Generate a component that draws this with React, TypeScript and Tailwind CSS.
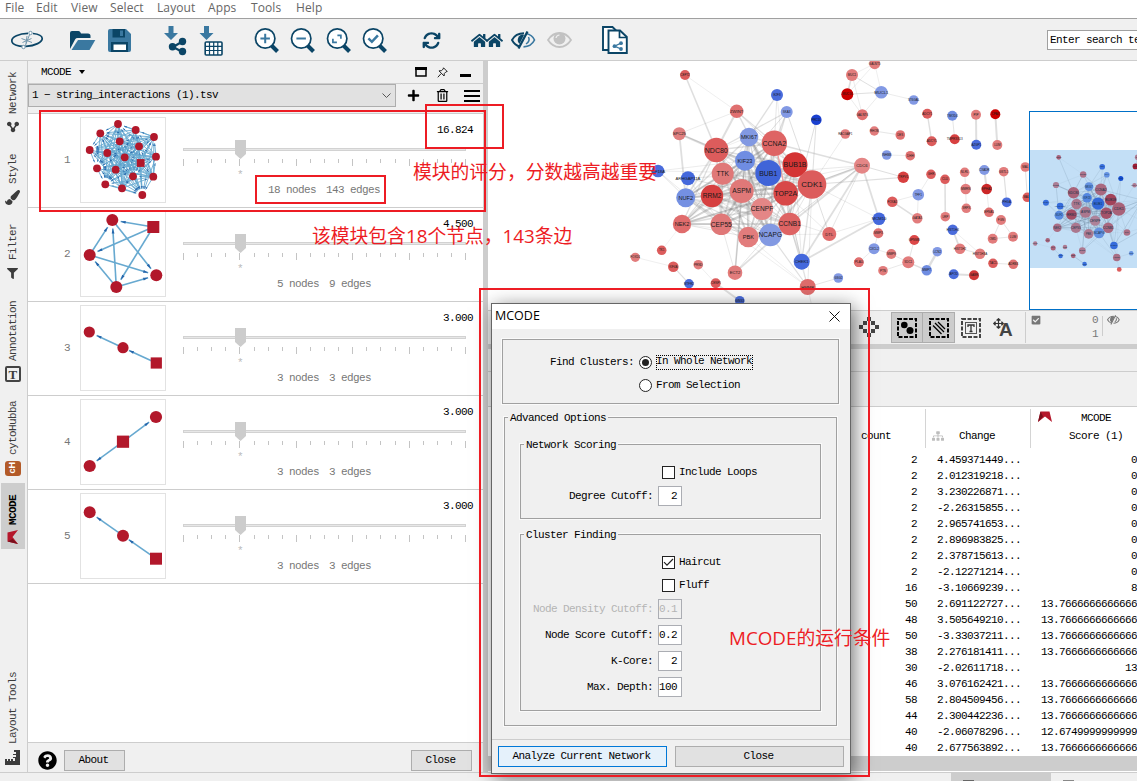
import React from "react";
import { FaShareAlt, FaFilter, FaPaintBrush, FaHome, FaEyeSlash, FaQuestionCircle, FaSitemap, FaCheckSquare, FaArrowsAlt, FaRegTrashAlt, FaPlus } from "react-icons/fa";
import { FaArrowsRotate } from "react-icons/fa6";

const DARK = "#0b4566";
const MID = "#3a78a0";

/* ---------- network data ---------- */

type N = [id: string, x: number, y: number, r: number, fill: string, label?: string];

const R = "#dc5c5c";
const L = "#e27c7c";
const B = "#4a6cdc";
const LB = "#8299e4";

const core: N[] = [
  ["MKI67", 749, 137, 9.3, "#8299e2"],
  ["NDC80", 716.3, 150, 12.2, "#dc5c5c"],
  ["CCNA2", 774.3, 143.3, 12.7, "#de6464"],
  ["KIF23", 745, 160.7, 10, "#6f8de2"],
  ["BUB1B", 795, 164.7, 12.5, "#d43434"],
  ["BUB1", 768.3, 173, 13, "#4064d8"],
  ["TTK", 722.7, 173.7, 11, "#e07878"],
  ["CDK1", 812, 184.5, 14.3, "#dc5c5c"],
  ["ASPM", 741.7, 191, 12, "#e07878"],
  ["TOP2A", 785.7, 193.3, 12.3, "#d84848"],
  ["RRM2", 712, 196, 11.2, "#d64040"],
  ["NUF2", 685.7, 197.7, 9.5, "#7490e2"],
  ["CENPF", 762, 209, 11, "#e48686"],
  ["CEP55", 721.3, 224.3, 10.8, "#e07878"],
  ["CCNB1", 789.7, 224, 11.2, "#de6464"],
  ["NCAPG", 770.3, 235, 11.3, "#8299e2"],
  ["PBK", 748.3, 237, 10.3, "#e27c7c"],
  ["NEK2", 682, 224, 9.2, "#e06c6c"],
];

const outer: N[] = [
  ["CEP72", 685, 75, 5, R], ["DNMT", 736.7, 111.3, 6.8, "#e07070", "ZWINT"],
  ["E2F8", 777, 95, 6, B], ["SKA3", 786.7, 112, 6, LB], ["PRC1L", 816.3, 119.7, 5.3, "#1a40d0"],
  ["SPC25", 679.3, 133.7, 6.5, "#e07f7f"], ["KIF18A", 658, 171, 6.3, B],
  ["ARHGAP11A", 688, 178.3, 7, "#4468dc"], ["DTL", 829.3, 234, 7, "#e06c6c"],
  ["CHEK1", 801.7, 261.7, 8, "#4468dc"], ["HMMR", 807.7, 287, 8, "#de6c6c"],
  ["ECT2", 735, 272.7, 7.3, L], ["TK1", 661.7, 250.3, 4.8, R], ["FOXD1", 635.3, 257.3, 4.6, L],
  ["KIF4A", 673.3, 266.7, 5.3, R], ["PRND", 698.3, 264.7, 4.8, L], ["MTFR2", 689, 283.7, 4.7, B],
  ["CENPI", 715.7, 283.3, 5, R], ["GINS3", 739.7, 300.7, 4.8, B], ["GSG2", 838.3, 278, 4.8, LB],
  ["PIMS", 858.7, 262.3, 4.8, R], ["LOW", 813, 312, 5, R, ""],
  ["GALNT5", 874.7, 63.7, 5.5, L], ["MUC1", 852, 75, 6, L], ["MUC16", 847.3, 94.3, 6, "#cc0000"],
  ["MUCL1", 881.3, 92.3, 6.3, LB], ["ST6GAL", 913.7, 100, 4.8, LB], ["GALNT6", 862.3, 114.7, 5.5, "#e07070"],
  ["RACGAP1", 845.3, 134, 4.8, L], ["SHH", 874.3, 131, 4.7, L, "RHOB"], ["DES", 900.3, 135, 4.8, "#e07070"],
  ["INHBB", 886.7, 155, 4.8, LB], ["DHH", 910.3, 155.7, 4.8, "#e07070"], ["CDC6", 862, 165.7, 8, "#e48686"],
  ["TRPV1", 903.3, 177.3, 5.7, "#d84040"], ["GHR", 931, 174.3, 4.8, R], ["TFF1", 918.3, 194.7, 5.8, LB],
  ["FOXA1", 892.3, 201.7, 5.3, R], ["ESR1", 917.3, 218.3, 5.2, L, "GATA3"], ["MCM10", 879, 218.7, 6.3, "#4468dc"],
  ["MMP3", 878.3, 233.3, 5, "#e07070"], ["COMP", 874, 248.7, 5.5, LB, "CXCL2"], ["MMP9", 891.3, 254, 5, L],
  ["SPP1", 859, 262.3, 4.8, "#e07070", "PLAU"], ["PTN", 883, 270.7, 4.8, L], ["SDC1", 908.3, 262.3, 6, L],
  ["WNT1", 914.3, 240, 5, "#dc4848", "GPNMB"], ["MMP7", 926.7, 270.3, 5.2, "#6f8de2"], ["SCN1", 937.3, 251.7, 4.8, LB, "LCN2"],
  ["ADCY1", 927.3, 113.7, 5, R], ["ADCY5", 931.7, 141.3, 5, R], ["THBD", 952.3, 115.7, 5, "#6f8de2", "TMOD4"],
  ["TNMD", 954.7, 139.3, 5, "#d84040", "TMPRSS13"], ["PIP", 976, 114.7, 5, L], ["AZGP1", 976.3, 144.7, 5, B],
  ["APOA", 995.3, 114.3, 5, "#cc0000", "CPA3"], ["LUM", 997.3, 145, 5, L, "LUM"], ["NLRL", 964.7, 172.3, 4.8, L],
  ["MMRN", 965.7, 189, 5.2, L], ["BMP", 966.3, 208.3, 4.8, L, "SRPX"], ["KIF", 984.3, 170, 5, LB, "CXADR"],
  ["EPHA", 986.7, 189, 5.3, "#cc2828", "EPHA2"], ["EFNA", 989, 212.3, 4.8, "#e07070", "EFNA5"], ["GSTL1", 1003.7, 171.7, 4.8, L],
  ["FAH", 1006.7, 202.3, 4.9, B, "PHGA"], ["MAL", 1025.3, 167, 4.8, L], ["MAL2", 1027.3, 197.3, 4.8, R],
  ["CLU", 945, 179.3, 4.8, R], ["LRP", 945.3, 216.7, 4.8, L], ["FGN", 1001, 220, 5, L], ["DVD", 992.7, 238.7, 5, L, "OMD"],
  ["LUH", 1013, 236.7, 5, L, "LUM"], ["UGT8", 952.7, 229.7, 5.2, B, "HIST1H4"], ["HIST", 960, 248.7, 5.3, L, "HIST1H2"],
  ["H3", 980, 253.7, 5.3, L, "HIST1H3A"], ["TAC1", 993, 263.3, 4.8, R], ["NPY", 1013.3, 264.3, 4.8, "#e07070", "ADRB3"],
  ["APOD", 953.7, 274.3, 5, B], ["GABR", 974, 275.3, 5, "#d03838"],
];

const nodes = [...core, ...outer];
const at = new Map(nodes.map((n) => [n[0], n] as const));

type E = [a: string, b: string, w: number];
const links: E[] = [
  ["CEP72", "NDC80", 1.6], ["CEP72", "DNMT", 0.5], ["DNMT", "NDC80", 2], ["DNMT", "SPC25", 0.6], ["DNMT", "BUB1", 1.4],
  ["DNMT", "CCNA2", 1.2], ["DNMT", "CDK1", 0.8], ["SPC25", "NDC80", 2.2], ["SPC25", "NUF2", 1.8], ["SPC25", "KIF23", 0.8],
  ["SPC25", "BUB1", 0.6], ["E2F8", "CCNA2", 0.8], ["E2F8", "MKI67", 1.3], ["E2F8", "CCNB1", 0.5], ["SKA3", "NDC80", 1.2], ["SKA3", "BUB1", 1.2],
  ["SKA3", "KIF23", 1], ["SKA3", "CDK1", 1], ["SKA3", "CCNA2", 1.2], ["PRC1L", "CDK1", 1], ["PRC1L", "CCNB1", 1],
  ["KIF18A", "KIF23", 0.6], ["KIF18A", "BUB1", 0.6], ["KIF18A", "CEP55", 0.6], ["KIF18A", "NUF2", 0.8],
  ["ARHGAP11A", "BUB1", 0.8], ["ARHGAP11A", "ASPM", 1], ["ARHGAP11A", "NUF2", 1], ["ARHGAP11A", "CEP55", 0.7],
  ["CDC6", "CCNA2", 1.7], ["CDC6", "CDK1", 2], ["CDC6", "CCNB1", 1.7], ["CDC6", "TOP2A", 1], ["CDC6", "BUB1", 0.7],
  ["CDC6", "RRM2", 0.6], ["CDC6", "CHEK1", 1.8], ["CDC6", "MCM10", 1.8], ["CDC6", "DTL", 0.8], ["CDC6", "TRPV1", 1],
  ["CDC6", "NCAPG", 1], ["CDK1", "TRPV1", 1.2], ["CDK1", "MCM10", 0.6], ["CHEK1", "MCM10", 1.8], ["DTL", "MCM10", 0.6],
  ["CHEK1", "CDK1", 1.4], ["CHEK1", "CCNB1", 1.6], ["CHEK1", "CCNA2", 0.9], ["CHEK1", "TOP2A", 0.7], ["CHEK1", "BUB1B", 0.7],
  ["DTL", "CDK1", 1], ["DTL", "RRM2", 0.6], ["DTL", "TOP2A", 0.6], ["DTL", "NCAPG", 0.5],
  ["HMMR", "CDK1", 0.7], ["HMMR", "CCNB1", 0.7], ["HMMR", "NCAPG", 1.2], ["HMMR", "CEP55", 0.5], ["HMMR", "PBK", 0.5],
  ["HMMR", "CHEK1", 0.7], ["HMMR", "GSG2", 0.8], ["HMMR", "LOW", 0.6], ["ECT2", "CCNB1", 1.7], ["ECT2", "ASPM", 1.7],
  ["ECT2", "CDK1", 0.8], ["ECT2", "CEP55", 0.7], ["ECT2", "KIF23", 1.1], ["TK1", "NEK2", 0.4], ["FOXD1", "KIF4A", 0.5],
  ["KIF4A", "MTFR2", 1.2], ["PRND", "CENPI", 0.5], ["CENPI", "GINS3", 2], ["RACGAP1", "CDK1", 0.6],
  ["GALNT5", "MUC1", 0.5], ["GALNT5", "MUC16", 0.5], ["GALNT5", "MUCL1", 0.5], ["MUC1", "MUC16", 1.6], ["MUC1", "MUCL1", 1],
  ["MUC16", "MUCL1", 1], ["MUC16", "GALNT6", 0.6], ["MUC1", "GALNT6", 0.6], ["MUCL1", "GALNT6", 0.6], ["MUCL1", "ST6GAL", 0.6],
  ["SHH", "DES", 0.8], ["INHBB", "DHH", 0.6], ["GHR", "TFF1", 0.6], ["TFF1", "FOXA1", 0.6], ["TFF1", "ESR1", 0.6],
  ["FOXA1", "ESR1", 1.6], ["MCM10", "MMP3", 0.5], ["MMP3", "COMP", 0.7], ["COMP", "MMP9", 0.6], ["COMP", "SPP1", 0.6],
  ["MMP9", "SDC1", 0.7], ["PTN", "SDC1", 0.7], ["WNT1", "SDC1", 0.8], ["SDC1", "MMP7", 1.4], ["MMP7", "SCN1", 2.4],
  ["ADCY1", "ADCY5", 1.4], ["THBD", "TNMD", 0.8], ["PIP", "AZGP1", 2], ["APOA", "LUM", 2], ["NLRL", "MMRN", 0.7],
  ["MMRN", "BMP", 0.7], ["KIF", "EPHA", 2], ["EPHA", "EFNA", 0.6], ["GSTL1", "FAH", 1.2], ["MAL", "MAL2", 1], ["CLU", "LRP", 1.6],
  ["FGN", "DVD", 0.8], ["FGN", "LUH", 0.8], ["DVD", "LUH", 0.8], ["UGT8", "HIST", 1.8], ["UGT8", "H3", 0.5], ["HIST", "H3", 0.8],
  ["TAC1", "NPY", 0.8], ["APOD", "GABR", 2],
];

core.forEach((a, i) =>
  core.slice(i + 1).forEach((b, j) => {
    const h = (i * 7 + j * 5) % 11;
    if (h !== 3) links.push([a[0], b[0], 0.5 + h * 0.16]);
  }),
);

function Graph({ maxX = 2000 }: { maxX?: number }) {
  return (
    <>
      <g stroke="#808080" strokeOpacity="0.25">
        {links.map(([a, b, w], i) => {
          const p = at.get(a)!;
          const q = at.get(b)!;
          return <line key={i} x1={p[1]} y1={p[2]} x2={q[1]} y2={q[2]} strokeWidth={w} />;
        })}
      </g>
      <line x1="777" y1="150" x2="784" y2="185" stroke="#f0a0a0" strokeWidth="1.2" />
      <g fontFamily="Liberation Sans, sans-serif" textAnchor="middle" fill="#1a1a1a">
        {nodes.filter((n) => n[1] < maxX).map(([id, x, y, r, fill, label]) => {
          const size = r > 12 ? 7 : r > 10.5 ? 6.6 : r > 9 ? 5.6 : r > 6.2 ? 4.2 : 3;
          return (
            <g key={id}>
              <circle cx={x} cy={y} r={r} fill={fill} />
              {label !== "" && <text x={x} y={y + size * 0.36} fontSize={id === "CDK1" ? 8 : size}>{label ?? id}</text>}
            </g>
          );
        })}
      </g>
    </>
  );
}

/* ---------- toolbar icons ---------- */

function Svg({ x, y = 24, w, h = 32, className = "", children }: { x: number; y?: number; w: number; h?: number; className?: string; children: React.ReactNode }) {
  return (
    <svg viewBox={`${x} ${y} ${w} ${h}`} width={w} height={h} className={`block shrink-0 ${className}`} fill="none">
      {children}
    </svg>
  );
}

function Magnifier({ x, className, children }: { x: number; className: string; children: React.ReactNode }) {
  return (
    <Svg x={x} w={26} className={className}>
      <g transform={`translate(${x} 0)`}>
        <path d="M17.500 45.500l6 6" stroke={DARK} strokeWidth="4" />
        <circle cx="11.200" cy="38.500" r="9.700" fill="#fff" stroke={DARK} strokeWidth="1.700" />
        <g stroke={MID} strokeWidth="2" transform="translate(-0.100 -0.200)">{children}</g>
      </g>
    </Svg>
  );
}

function Toolbar() {
  return (
    <div className="flex h-[42px] shrink-0 items-start border-b border-[#cdcdcd] bg-[#f0f0f0] pt-[5px]">
      <Svg x={10} w={34} className="ml-[10px]">
        <path d="M28 33.400C19 33.500 11.500 37 11.800 41c.3 3.800 7 5.800 14 5.300" stroke={DARK} strokeWidth="1.700" />
        <path d="M26 46.300c9-.5 16.500-4 16.200-8-.2-2.300-3.500-4.200-9.200-4.800" stroke={DARK} strokeWidth="1.700" />
        <path d="M30 33.500l-5 13M21.500 38.500l10.500 4M22.500 42.500l9-4M27 36l-1 7.500" stroke="#7397ad" strokeWidth="1" />
        <circle cx="30.500" cy="33" r="1.700" fill="#fff" stroke="#7397ad" />
        <circle cx="23.500" cy="47" r="1.700" fill="#fff" stroke="#7397ad" />
      </Svg>
      <Svg x={70} w={26} className="ml-[26px]">
        <path d="M70 49V33q0-2 2-2h6.500q1.500 0 2 1.500l.5 1H88q2.500 0 2.500 2.500v2H77.500q-1.500 0-2.300 1.300z" fill={DARK} />
        <path d="M78 40h17.300l-5.800 10H71.500z" fill={MID} />
      </Svg>
      <Svg x={107} w={25} className="ml-[11px]">
        <path d="M108 31q0-2 2-2h16l5 5v16q0 2-2 2h-19q-2 0-2-2z" fill={MID} />
        <path d="M112.500 29H125v8.500h-12.500zM111 42h17v10h-17z" fill={DARK} />
        <path d="M120 30.500h3v5.500h-3z" fill={MID} />
        <path d="M113.500 44.500H126V50h-12.500z" fill="#fff" />
      </Svg>
      <Svg x={164} w={24} className="ml-[32px]">
        <path d="M168.500 26h5v7h4.500l-7 7-7-7h4.500z" fill={MID} />
        <path d="M182.500 41.500L173 47l9.500 5" stroke={DARK} strokeWidth="2.200" />
        <circle cx="182.500" cy="41.500" r="3.700" fill={DARK} />
        <circle cx="172.500" cy="46.800" r="3.700" fill={DARK} />
        <circle cx="182.500" cy="51.500" r="3.700" fill={DARK} />
      </Svg>
      <Svg x={199} w={25} className="ml-[11px]">
        <path d="M204 26h5v7h4.500l-7 7-7-7h4.500z" fill={MID} />
        <rect x="205.200" y="42" width="16.800" height="13" rx="1" fill="#fff" stroke={DARK} strokeWidth="1.600" />
        <path d="M205 46.300h17M205 50.500h17M209.500 42v13M213.700 42v13M217.800 42v13" stroke={DARK} strokeWidth="1.200" />
      </Svg>
      <Magnifier x={254} className="ml-[30px]"><path d="M11.300 34v9.500M6.500 38.700H16" /></Magnifier>
      <Magnifier x={290} className="ml-[10px]"><path d="M6.500 38.700H16" /></Magnifier>
      <Magnifier x={326} className="ml-[10px]"><path d="M11.500 35.500h3.500V39M11 42.500H7V39" strokeWidth="1.700" /></Magnifier>
      <Magnifier x={362} className="ml-[10px]"><path d="M6.500 38.500l3.500 3.500 6-6.500" strokeWidth="2.500" /></Magnifier>
      <div className="ml-[34px] flex h-8 w-[18px] items-center"><FaArrowsRotate size={19} color={DARK} className="shrink-0" /></div>
      <div className="ml-[31px] flex h-8 items-center"><FaHome size={17} color={DARK} /><FaHome size={17} color={DARK} className="-ml-[2px]" /></div>
      <Svg x={511} w={25} className="ml-[8px]">
        <path d="M524 33.200c-6 0-10 3-12 6.800 1.800 3.500 4.700 5.800 8 6.600" stroke={DARK} strokeWidth="1.900" />
        <path d="M526 33.500c3.800.8 7 3 8.500 6.500-1.800 3.800-5.500 6.700-11 6.800" stroke={MID} strokeWidth="1.700" />
        <path d="M523 34.500a5.500 5.500 0 0 0-3.500 9.500l4.500-9z" fill={DARK} />
        <path d="M518.500 48.500L527.500 31.500" stroke={DARK} strokeWidth="2.300" />
        <path d="M528.500 37q2 4-2.500 7" stroke={MID} strokeWidth="1.500" />
      </Svg>
      <Svg x={547} w={25} className="ml-[11px]">
        <path d="M548 40q4.500-7 11.500-7t11.500 7q-4.500 7-11.500 7T548 40z" stroke="#c2c2c2" strokeWidth="1.800" />
        <circle cx="559.500" cy="38.500" r="6" fill="#c2c2c2" />
        <path d="M556 38q.5-3 3.500-3" stroke="#eee" strokeWidth="1.200" />
      </Svg>
      <Svg x={602} w={27} className="ml-[30px]">
        <path d="M603 27h9.500l4 4V50H603z" fill="#fff" stroke={DARK} strokeWidth="1.900" />
        <path d="M608.500 30.500H620l6.800 6.500v16h-18.300z" fill="#fff" stroke={DARK} strokeWidth="1.900" />
        <path d="M619.500 30.500V37.500H627" stroke={DARK} strokeWidth="1.700" />
        <path d="M621 43.200l-6.500 3 6.500 2.800" stroke={MID} strokeWidth="1.300" />
        <circle cx="621" cy="43.200" r="1.900" fill={MID} /><circle cx="614.500" cy="46.200" r="1.900" fill={MID} /><circle cx="621" cy="49" r="1.900" fill={MID} />
      </Svg>
      <div className="ml-auto mt-[6px] flex h-5 w-[90px] items-center overflow-hidden whitespace-pre border border-r-0 border-[#a0a0a0] bg-white pl-[2px]">Enter search te</div>
    </div>
  );
}

/* ---------- left sidebar ---------- */

function SideTab({ label, className, children }: { label: string; className: string; children: React.ReactNode }) {
  return (
    <div className={`flex w-full shrink-0 flex-col items-center justify-end ${className}`}>
      <span className="rotate-180 whitespace-pre leading-[14px] [writing-mode:vertical-rl]">{label}</span>
      <span className="mt-[5px] flex h-4 items-center">{children}</span>
    </div>
  );
}

function McodeMark({ className = "" }: { className?: string }) {
  return (
    <svg viewBox="0 0 14 12" width="14" height="12" className={`shrink-0 ${className}`}>
      <path d="M2.500 .5h9L14 11 7 5.500 0 11z" fill="#b5182c" />
      <path d="M2.500 .5L5 5.500 0 11z" fill="#7a0f1c" />
    </svg>
  );
}

function Sidebar() {
  return (
    <div className="flex w-7 shrink-0 flex-col border-r border-[#cdcdcd] pr-[2px] text-[#3c3c3c]">
      <SideTab label="Network" className="h-[74px]"><FaShareAlt size={12} className="-scale-x-100 rotate-90" /></SideTab>
      <SideTab label="Style" className="h-[70px]"><FaPaintBrush size={15} /></SideTab>
      <SideTab label="Filter" className="h-[76px]"><FaFilter size={11} /></SideTab>
      <SideTab label="Annotation" className="h-[101px]">
        <span className="flex h-4 w-4 items-center justify-center rounded-[2px] border-2 border-[#444] font-['Liberation_Serif'] text-[13px] font-bold leading-none">T</span>
      </SideTab>
      <SideTab label="cytoHubba" className="h-[94px]">
        <span className="flex h-[15px] w-4 items-center justify-center rounded-[3px] bg-[#b35a28]"><b className="-rotate-90 font-['Liberation_Sans'] text-[9px] tracking-normal text-white">cH</b></span>
      </SideTab>
      <div className="mt-[7px] flex h-[66px] w-6 flex-col items-center justify-end self-end bg-[#cdcdcd] pb-[6px]">
        <span className="rotate-180 font-bold leading-[14px] text-black [writing-mode:vertical-rl]">MCODE</span>
        <McodeMark className="mt-[6px] -rotate-90" />
      </div>
      <SideTab label="Layout Tools" className="h-[216px]">
        <svg viewBox="0 0 15 15" width="15" height="15"><path d="M15 0v15H0V9h2v2h1V9h2v2h1V9h2v2h2V8H8V7h3V5H8V4h3V2H9V0z" fill="#3c3c3c" /></svg>
      </SideTab>
    </div>
  );
}

/* ---------- cluster list ---------- */

type Cluster = { score: string; nodes: number; edges: number; r: number; dots: [number, number][]; sq: number; arrows: [number, number][] };

const c1: [number, number][] = [
  [38, 7], [55.7, 13], [20.3, 16.3], [74, 20], [39.7, 24.3], [59, 29.3], [9.7, 33], [27.3, 36], [44.7, 40.3],
  [76, 39.7], [17, 51.3], [35.7, 52.7], [53, 59.3], [73.3, 59.7], [25.3, 67.3], [42, 71.3], [62.3, 78], [60.7, 46],
];
const c1Pairs: [number, number][] = c1.flatMap((_, i) =>
  c1.slice(i + 1).map((_, j): [number, number] => (((i + j) % 2 ? [i, i + 1 + j] : [i + 1 + j, i]) as [number, number])),
).filter((_, k) => k % 15 !== 4);

const clusters: Cluster[] = [
  { score: "16.824", nodes: 18, edges: 143, r: 3.9, dots: c1, sq: 17, arrows: c1Pairs },
  { score: "4.500", nodes: 5, edges: 9, r: 6, sq: 4, dots: [[32.3, 9], [9.7, 44], [36.3, 76], [76.3, 64.3], [73.3, 16]], arrows: [[4, 0], [4, 1], [4, 2], [0, 3], [1, 0], [1, 3], [2, 1], [2, 0], [2, 3]] },
  { score: "3.000", nodes: 3, edges: 3, r: 5.6, sq: 2, dots: [[9.3, 27], [43, 42.7], [76.3, 58]], arrows: [[2, 1], [1, 0]] },
  { score: "3.000", nodes: 3, edges: 3, r: 6.1, sq: 1, dots: [[76, 18], [43, 42.7], [9.7, 67]], arrows: [[1, 0], [1, 2]] },
  { score: "3.000", nodes: 3, edges: 3, r: 6, sq: 2, dots: [[9.7, 19.3], [43, 42.7], [76, 65.7]], arrows: [[2, 1], [1, 0]] },
];

function ClusterThumb({ c }: { c: Cluster }) {
  const dense = c.dots.length > 10;
  return (
    <svg width="86" height="86" viewBox="0 0 86 86" className="block">
      <rect x="0.500" y="0.500" width="85" height="85" fill="none" stroke="#c4c4c4" strokeDasharray="1 1" />
      {c.arrows.map(([a, b], i) => {
        const [x1, y1] = c.dots[a];
        const [x2, y2] = c.dots[b];
        const len = Math.hypot(x2 - x1, y2 - y1);
        const ux = (x2 - x1) / len;
        const uy = (y2 - y1) / len;
        const gap = dense || c.dots.length > 3 || b !== 1 ? 2.500 : 1;
        const tx = x2 - ux * (c.r + gap);
        const ty = y2 - uy * (c.r + gap);
        const al = dense ? 2.6 : 5;
        const aw = dense ? 0.7 : 1.4;
        const bx = tx - ux * al;
        const by = ty - uy * al;
        return (
          <g key={i}>
            <line x1={x1} y1={y1} x2={tx} y2={ty} stroke="#67a9d0" strokeWidth={dense ? 0.9 : 1.6} />
            <path d={`M${tx} ${ty}L${bx - uy * aw} ${by + ux * aw}L${bx + uy * aw} ${by - ux * aw}z`} fill="#2565ab" />
          </g>
        );
      })}
      {c.dots.map(([x, y], i) =>
        i === c.sq
          ? <rect key={i} x={x - c.r} y={y - c.r} width={c.r * 2} height={c.r * 2} fill="#b2182b" />
          : <circle key={i} cx={x} cy={y} r={c.r} fill="#b2182b" />,
      )}
    </svg>
  );
}

function Slider() {
  return (
    <svg width="285" height="28" viewBox="0 0 285 28" className="block">
      <rect x="0.500" y="8.500" width="282" height="2" fill="#e7e7e7" stroke="#d2d2d2" />
      {Array.from({ length: 21 }, (_, i) => (
        <path key={i} d={`M${Math.round(i * 14.1) + 0.5} 19v${i % 4 ? 4 : 7}`} stroke="#c4c4c4" />
      ))}
      <path d="M52 0h11v14l-5.500 5-5.500-5z" fill="#cccccc" />
    </svg>
  );
}

function ClusterRow({ c, index }: { c: Cluster; index: number }) {
  return (
    <div className="flex h-[94px] items-start border-b border-[#cdcdcd]">
      <div className="flex h-[93px] w-[52px] items-center justify-end pr-[10px] text-[#777]">{index}</div>
      <div className="mt-[3px]"><ClusterThumb c={c} /></div>
      <div className="ml-[17px] flex w-[290px] flex-col">
        <div className="mt-[10px] h-[13px] text-right leading-[13px] text-black">{c.score}</div>
        <div className="mt-[3px]"><Slider /></div>
        <div className="ml-[54px] h-3 leading-[14px] text-[#bbb]">*</div>
        <div className="mt-[3px] h-[14px] whitespace-pre pr-[8px] text-center leading-[14px] text-[#777]">
          {c.nodes} nodes<span className="ml-[10px]">{c.edges} edges</span>
        </div>
      </div>
    </div>
  );
}

function WinButton({ children, className }: { children: React.ReactNode; className: string }) {
  return <button className={`flex items-center justify-center border border-[#adadad] bg-[#e1e1e1] pr-[2px] ${className}`}>{children}</button>;
}

function McodePanel() {
  return (
    <div className="flex w-[455px] shrink-0 flex-col">
      <div className="flex h-[23px] items-center border-b border-[#cdcdcd] pl-[13px]">
        <span>MCODE</span>
        <svg width="6" height="4" className="ml-[8px]"><path d="M0 0h6L3 4z" fill="#000" /></svg>
        <div className="ml-auto flex items-center pr-[12px]">
          <svg width="12" height="10"><path d="M1 1.500h10v7.500H1z" fill="none" stroke="#000" strokeWidth="1.500" /><path d="M0 0h12v3H0z" /></svg>
          <svg width="11" height="11" viewBox="0 0 11 11" className="ml-[10px]" fill="none" stroke="#222"><path d="M6.500.800l3.700 3.700-1.200.3-1.700 1.700-.2 2.500L2 3.900l2.500-.2L6.200 2zM4 6.700L.800 10.300" /></svg>
          <span className="ml-[12px] mt-[7px] h-[3px] w-[11px] bg-black" />
        </div>
      </div>
      <div className="flex h-[30px] items-start">
        <div className="flex h-[23px] w-[368px] items-center justify-between border border-[#adadad] bg-[#e1e1e1] pl-[3px] pr-[4px]">
          <span>1 − string_interactions (1).tsv</span>
          <svg width="9" height="6" fill="none" stroke="#555"><path d="M.500.500l4 4 4-4" /></svg>
        </div>
        <div className="flex h-[23px] items-center">
          <FaPlus size={13} className="ml-[11px]" />
          <FaRegTrashAlt size={13} className="ml-[16px]" />
          <svg width="16" height="14" className="ml-[15px]"><path d="M0 2h16M0 7h16M0 12h16" stroke="#000" strokeWidth="2" /></svg>
        </div>
      </div>
      <div className="-mt-px flex-1 border-t border-[#cdcdcd] bg-white">
        {clusters.map((c, i) => <ClusterRow key={i} c={c} index={i + 1} />)}
      </div>
      <div className="flex h-[30px] shrink-0 items-start border-t border-[#cdcdcd] pl-[10px] pr-[11px] pt-[7px]">
        <FaQuestionCircle size={19} color="#000" className="mt-px" />
        <WinButton className="ml-[7px] h-[21px] w-[61px]">About</WinButton>
        <WinButton className="ml-auto h-[21px] w-[61px]">Close</WinButton>
      </div>
    </div>
  );
}

/* ---------- right side ---------- */

function NetworkView() {
  return (
    <svg width="649" height="249" viewBox="488 61 649 249" className="block shrink-0 bg-white tracking-normal">
      <defs>
        <clipPath id="eye"><rect x="1030" y="112" width="107" height="197" /></clipPath>
      </defs>
      <Graph />
      <rect x="1029.500" y="111.500" width="120" height="198" fill="#fff" stroke="#0070c8" />
      <g clipPath="url(#eye)">
        <g transform="translate(734.7 121.800) scale(0.473)"><Graph maxX={856} /></g>
        <rect x="1030" y="150" width="107" height="118" fill="#0078d7" fillOpacity="0.235" />
      </g>
    </svg>
  );
}

function Dashed({ children, light = false }: { children?: React.ReactNode; light?: boolean }) {
  return (
    <svg width="20" height="20" viewBox="0 0 20 20" className="block" fill="none">
      <rect x="1" y="1" width="18" height="18" stroke={light ? "#444" : "#000"} strokeWidth="2" strokeDasharray="4 1.500" />
      {children}
    </svg>
  );
}

function ViewToolbar() {
  return (
    <div className="flex h-[34px] shrink-0 border-t border-[#cdcdcd] pt-px">
      <svg width="20" height="20" viewBox="0 0 20 20" className="ml-[371px] mt-[5px] shrink-0" fill="#444">
        <path d="M8 0h4v4H8zM4 4h4v4H4zM12 4h4v4h-4zM0 8h4v4H0zM16 8h4v4h-4zM4 12h4v4H4zM12 12h4v4h-4zM8 16h4v4H8z" />
      </svg>
      <div className="ml-[12px] flex h-[31px] w-8 items-center justify-center border border-[#adadad] bg-[#cccccc]">
        <Dashed><circle cx="7.300" cy="7" r="3.300" fill="#000" /><circle cx="13" cy="12.500" r="3.500" fill="#000" /></Dashed>
      </div>
      <div className="flex h-[31px] w-8 items-center justify-center border border-l-0 border-[#adadad] bg-[#cccccc]">
        <Dashed><path d="M9 4l7 7M6 5l9 9M4 7.500l8.500 8.500" stroke="#000" strokeWidth="1.300" /></Dashed>
      </div>
      <div className="ml-[6px] mt-[6px]">
        <Dashed light><rect x="4.500" y="4.500" width="11" height="11" stroke="#555" /><path d="M7 9V7h6v2M10 7v6.500M8.500 13.500h3" stroke="#333" strokeWidth="1.300" /></Dashed>
      </div>
      <div className="ml-[12px] mt-[6px] flex h-5 w-5 shrink-0 items-start">
        <FaArrowsAlt size={11} color="#333" className="shrink-0" />
        <span className="-ml-[5px] mt-[5px] font-['Liberation_Sans'] text-[19px] font-bold leading-[14px] tracking-normal text-[#444]">A</span>
      </div>
      <div className="ml-[12px] flex h-[31px] w-[100px] shrink-0 border-l border-[#cdcdcd] text-[#777]">
        <FaCheckSquare size={10} color="#777" className="ml-[5px] mt-[3px] shrink-0" />
        <div className="ml-[49px] flex w-[8px] flex-col items-end pt-px leading-[14px]">
          <span>0</span>
          <span>1</span>
        </div>
        <span className="ml-[4px] mt-[4px] h-5 w-px bg-[#cdcdcd]" />
        <svg width="13" height="10" viewBox="0 0 25 19" className="ml-[4px] mt-[3px] shrink-0" fill="none" stroke="#777" strokeWidth="2">
          <path d="M13 2.200C7 2.200 3 5.200 1 9c1.800 3.500 4.700 5.800 8 6.600M15 2.500c3.800.8 7 3 8.500 6.500-1.800 3.800-5.500 6.700-11 6.800M7.500 18L16.500.5M17.500 6q2 4-2.500 7" />
          <path d="M12 3.500A5.500 5.500 0 0 0 8.500 13L13 4z" fill="#777" />
        </svg>
      </div>
    </div>
  );
}

const L13 = "13.7666666666666";
const rows: [string, string, string][] = [
  ["2", "4.459371449...", "0"], ["2", "2.012319218...", "0"], ["2", "3.230226871...", "0"], ["2", "-2.26315855...", "0"],
  ["2", "2.965741653...", "0"], ["2", "2.896983825...", "0"], ["2", "2.378715613...", "0"], ["2", "-2.12271214...", "0"],
  ["16", "-3.10669239...", "8"], ["50", "2.691122727...", L13], ["48", "3.505649210...", L13], ["50", "-3.33037211...", L13],
  ["38", "2.276181411...", L13], ["30", "-2.02611718...", "13"], ["46", "3.076162421...", L13], ["58", "2.804509456...", L13],
  ["44", "2.300442236...", L13], ["40", "-2.06078296...", "12.6749999999999"], ["40", "2.677563892...", L13],
];

function DataTable() {
  return (
    <div className="flex flex-1 flex-col bg-white text-black">
      <div className="flex h-[45px] shrink-0 pt-[2px]">
        <div className="flex h-[39px] w-[438px] items-end justify-end border-r border-[#d4d4d4] pb-[5px] pr-[34px] leading-[14px]">count</div>
        <div className="flex h-[39px] w-[105px] items-end border-r border-[#d4d4d4] pb-[5px] pl-[6px] leading-[14px]">
          <FaSitemap size={12} color="#bdbdbd" className="mb-px" />
          <span className="ml-[15px]">Change</span>
        </div>
        <div className="flex flex-1 leading-[18px]">
          <McodeMark className="ml-[7px] mt-[2px]" />
          <div className="ml-[17px] flex flex-col items-center whitespace-pre"><span>MCODE</span><span>Score (1)</span></div>
        </div>
      </div>
      {rows.map(([n, change, score], i) => (
        <div key={i} className="flex h-4 leading-4">
          <span className="w-[429px] text-right">{n}</span>
          <span className="ml-[20px] w-[84px]">{change}</span>
          <span className="flex-1 text-right">{score}</span>
        </div>
      ))}
      <div className="h-[15px] shrink-0 bg-[#cdcdcd]" />
    </div>
  );
}

/* ---------- dialog ---------- */

function Etched({ title, className, children }: { title?: string; className: string; children: React.ReactNode }) {
  return (
    <div className={`flex flex-col border border-[#a0a0a0] shadow-[0_0_0_1px_#fafafa] ${className}`}>
      {title && <span className="-mt-[7px] ml-[3px] h-[14px] shrink-0 self-start whitespace-pre bg-[#f0f0f0] px-[2px] leading-[14px]">{title}</span>}
      {children}
    </div>
  );
}

function Field({ label, value, disabled = false }: { label: string; value: string; disabled?: boolean }) {
  return (
    <div className="-mt-px mb-px flex h-[26px] items-center">
      <span className={`w-[132px] whitespace-pre text-right ${disabled ? "text-[#b4b4b4]" : ""}`}>{label}</span>
      <span className={`ml-[5px] flex h-5 w-6 items-center justify-end overflow-hidden border border-[#abadb3] pr-[4px] ${disabled ? "text-[#b4b4b4]" : "bg-white"}`}>{value}</span>
    </div>
  );
}

function Check({ label, checked = false }: { label: string; checked?: boolean }) {
  return (
    <div className="flex h-[23px] items-center pl-[141px]">
      <span className="flex h-[13px] w-[13px] items-center justify-center border border-[#222] bg-white">
        {checked && <svg width="11" height="9" fill="none" stroke="#222" strokeWidth="1.200"><path d="M1 4.200l3 3L10 1" /></svg>}
      </span>
      <span className="ml-[4px]">{label}</span>
    </div>
  );
}

function Radio({ on = false }: { on?: boolean }) {
  return (
    <span className="flex h-[13px] w-[13px] shrink-0 items-center justify-center rounded-full border border-[#222] bg-white">
      {on && <span className="h-[7px] w-[7px] rounded-full bg-[#222]" />}
    </span>
  );
}

function Dialog() {
  return (
    <div className="absolute left-[491px] top-[303px] flex h-[471px] w-[360px] flex-col border border-[#666] bg-[#f0f0f0] text-black shadow-[3px_4px_18px_rgba(0,0,0,0.55)]">
      <div className="flex h-[25px] shrink-0 items-center justify-between bg-white pl-[3px] pr-[10px]">
        <span className="font-['Open_Sans'] text-[12.500px] tracking-normal">MCODE</span>
        <svg width="11" height="11" stroke="#111"><path d="M.500.500l10 10M10.500.500l-10 10" /></svg>
      </div>
      <Etched className="ml-[10px] mt-[10px] h-[65px] w-[337px] pt-[11px]">
        <div className="flex h-[23px] items-center">
          <span className="w-[131px] whitespace-pre text-right">Find Clusters:</span>
          <span className="ml-[5px]"><Radio on /></span>
          <span className="ml-[4px] h-[15px] w-[97px] whitespace-pre leading-[13px] outline-1 -outline-offset-1 outline-dotted outline-black">In Whole Network</span>
        </div>
        <div className="flex h-[23px] items-center">
          <span className="ml-[136px]"><Radio /></span>
          <span className="ml-[4px]">From Selection</span>
        </div>
      </Etched>
      <Etched title="Advanced Options" className="ml-[12px] mt-[13px] h-[309px] w-[333px]">
        <Etched title="Network Scoring" className="ml-[15px] mt-[19px] h-[75px] w-[301px] shrink-0">
          <div className="mt-[9px]"><Check label="Include Loops" /></div>
          <Field label="Degree Cutoff:" value="2" />
        </Etched>
        <Etched title="Cluster Finding" className="ml-[15px] mt-[15px] h-[177px] w-[301px] shrink-0">
          <div className="mt-[9px]">
            <Check label="Haircut" checked />
            <Check label="Fluff" />
            <Field label="Node Density Cutoff:" value="0.1" disabled />
            <Field label="Node Score Cutoff:" value="0.2" />
            <Field label="K-Core:" value="2" />
            <Field label="Max. Depth:" value="100" />
          </div>
        </Etched>
      </Etched>
      <div className="mt-auto flex h-[34px] shrink-0 gap-2 border-t border-[#cdcdcd] pl-[6px] pt-[6px]">
        <button className="h-[21px] w-[169px] border border-[#0078d7] bg-[#e5f1fb] pr-[2px]">Analyze Current Network</button>
        <WinButton className="h-[21px] w-[169px]">Close</WinButton>
      </div>
    </div>
  );
}

const note = "absolute whitespace-nowrap font-['Open_Sans','Noto_Sans_CJK_SC',sans-serif] font-normal leading-[24px] tracking-normal text-[#ed1c24]";

export default function App() {
  return (
    <div className="relative flex h-[781px] w-[1137px] flex-col overflow-hidden bg-[#f0f0f0] font-['Liberation_Mono',monospace] text-[11px] tracking-[-0.600px] text-black">
      <div className="flex h-[19px] shrink-0 border-b border-[#a0a0a0] bg-white pl-[5px] font-['Open_Sans'] text-[12px] leading-[16px] tracking-[0.100px] text-[#666]">
        <span className="w-[31px]">File</span>
        <span className="w-[35px]">Edit</span>
        <span className="w-[39px]">View</span>
        <span className="w-[47px]">Select</span>
        <span className="w-[51px]">Layout</span>
        <span className="w-[43px]">Apps</span>
        <span className="w-[45px]">Tools</span>
        <span>Help</span>
      </div>
      <Toolbar />
      <div className="flex h-[712px] shrink-0 border-b border-[#cdcdcd]">
        <Sidebar />
        <McodePanel />
        <div className="w-[5px] shrink-0 bg-[#cdcdcd]" />
        <div className="flex w-[649px] flex-col">
          <NetworkView />
          <ViewToolbar />
          <div className="h-[5px] shrink-0 bg-[#cdcdcd]" />
          <div className="h-[23px] shrink-0 border-b border-[#cdcdcd]" />
          <div className="h-[35px] shrink-0 border-b border-[#cdcdcd]" />
          <DataTable />
        </div>
      </div>
      <div className="flex h-2 items-start">
        <div className="ml-[951px] flex h-2 w-[100px] items-end bg-[#cdcdcd] pl-3"><span className="h-px w-[11px] bg-[#666]" /></div>
        <span className="ml-3 h-px w-[11px] self-end bg-[#888]" />
      </div>

      <Dialog />

      <div className="absolute left-[39px] top-[110px] h-[102px] w-[447px] border-2 border-[#ed1c24]" />
      <div className="absolute left-[425px] top-[104px] h-[45px] w-[79px] border-2 border-[#ed1c24]" />
      <div className="absolute left-[255px] top-[175px] h-[29px] w-[131px] border-2 border-[#ed1c24]" />
      <div className="absolute left-[479px] top-[288px] h-[489px] w-[391px] border-2 border-[#ed1c24]" />
      <div className={`${note} left-[413px] top-[160px] text-[18.800px]`}>模块的评分，分数越高越重要</div>
      <div className={`${note} left-[312px] top-[224px] text-[18.800px]`}>该模块包含18个节点，143条边</div>
      <div className={`${note} left-[729px] top-[626px] text-[18.800px]`}>MCODE的运行条件</div>
    </div>
  );
}
